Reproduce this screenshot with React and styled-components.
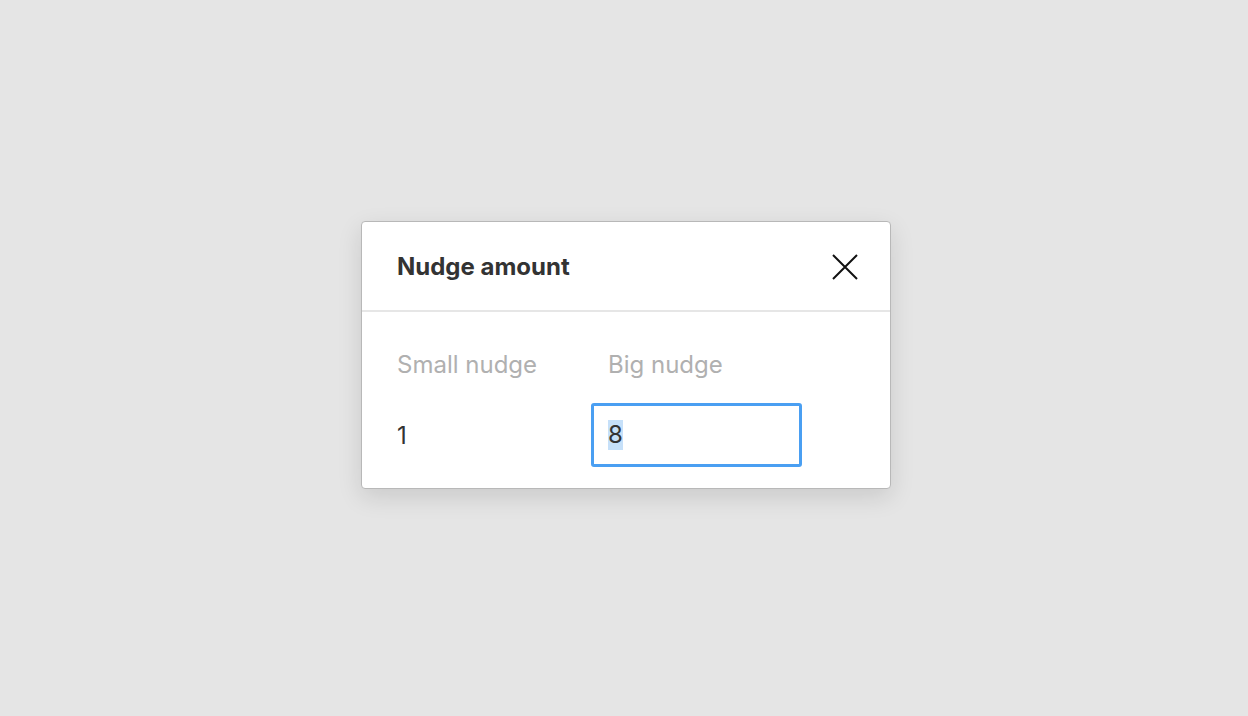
import styled, { createGlobalStyle } from 'styled-components';

const GlobalStyle = createGlobalStyle`
    html, body {
        margin: 0;
        padding: 0;
        background: #e5e5e5;
        font-family: 'Inter', 'Liberation Sans', sans-serif;
    }
`

export default function App() {
    return (
        <Page>
            <GlobalStyle />
            <Dialog>
                <Header>
                    <Title>Nudge amount</Title>
                    <CloseButton aria-label="Close">
                        <svg width="26" height="26" viewBox="0 0 26 26">
                            <path d="M1 1 L25 25 M25 1 L1 25" stroke="#111" strokeWidth="2" fill="none" />
                        </svg>
                    </CloseButton>
                </Header>
                <Body>
                    <Field>
                        <Label>Small nudge</Label>
                        <Value>1</Value>
                    </Field>
                    <Field>
                        <Label>Big nudge</Label>
                        <Value focused>
                            <Selected>8</Selected>
                        </Value>
                    </Field>
                </Body>
            </Dialog>
        </Page>
    )
}

const Page = styled.div`
    width: 1248px;
    height: 716px;
    display: flex;
    justify-content: flex-start;
    align-items: flex-start;
    padding: 221px 0 0 361px;
    box-sizing: border-box;
`

const Dialog = styled.div`
    width: 530px;
    height: 268px;
    box-sizing: border-box;
    background: #fff;
    border: 1px solid #b8b8b8;
    border-radius: 4px;
    box-shadow: 0 8px 24px rgba(0, 0, 0, 0.12);
    display: flex;
    flex-direction: column;
`

const Header = styled.div`
    height: 87px;
    display: flex;
    align-items: center;
    justify-content: space-between;
    padding: 1px 32px 0 35px;
    border-bottom: 2px solid #e6e6e6;
`

const Title = styled.h1`
    margin: 0;
    font-size: 24px;
    font-weight: 700;
    color: #333;
`

const CloseButton = styled.button`
    border: none;
    background: none;
    padding: 0;
    width: 26px;
    height: 26px;
    display: flex;
    cursor: pointer;
`

const Body = styled.div`
    display: grid;
    grid-template-columns: 211px 211px;
    padding: 39px 18px 0;
`

const Field = styled.div`
    display: flex;
    flex-direction: column;
    gap: 24px;
`

const Label = styled.div`
    font-size: 24px;
    color: #b0b0b0;
    padding-left: 17px;
    line-height: 28px;
`

const Value = styled.div`
    height: 64px;
    box-sizing: border-box;
    display: flex;
    align-items: center;
    padding-left: ${(props) => props.focused ? '14px' : '17px'};
    border: ${(props) => props.focused ? '3px solid #4a9ff2' : 'none'};
    border-radius: 3px;
    font-size: 24px;
    color: #333;
`

const Selected = styled.span`
    background: #c6e0f9;
    line-height: 30px;
`
